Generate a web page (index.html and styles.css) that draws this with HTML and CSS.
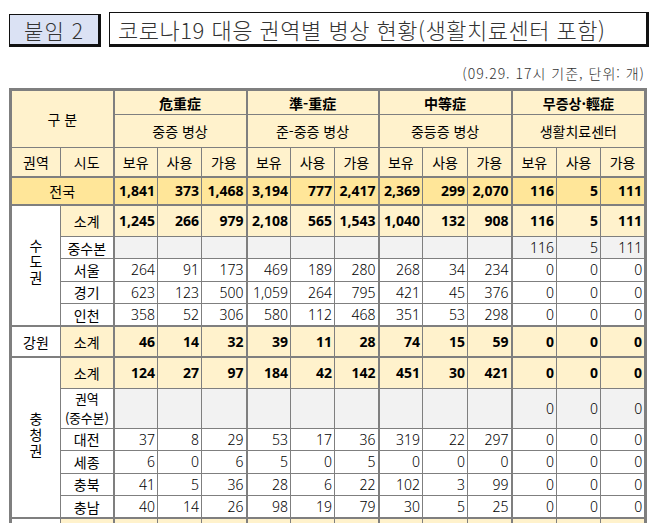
FILE: index.html
```html
<!DOCTYPE html>
<html lang="ko">
<head>
<meta charset="utf-8">
<title>코로나19 대응 권역별 병상 현황</title>
<link rel="stylesheet" href="styles.css">
</head>
<body>
<div class="page">
  <header class="title-row">
    <div class="tag">붙임 2</div>
    <div class="title">코로나19 대응 권역별 병상 현황(생활치료센터 포함)</div>
  </header>
  <p class="unit">(09.29. 17시 기준, 단위: 개)</p>
  <table class="beds">
    <colgroup class="lbl"><col class="c-region"><col class="c-city"></colgroup>
    <colgroup class="grp"><col class="c-a"><col class="c-a"><col class="c-b"></colgroup>
    <colgroup class="grp"><col class="c-a"><col class="c-a"><col class="c-a"></colgroup>
    <colgroup class="grp"><col class="c-a"><col class="c-b"><col class="c-a"></colgroup>
    <colgroup class="grp"><col class="c-b"><col class="c-a"><col class="c-b"></colgroup>
    <thead>
      <tr class="h1">
        <th colspan="2" rowspan="2" class="hd">구 분</th>
        <th colspan="3" class="hd bold">危重症</th>
        <th colspan="3" class="hd bold">準-重症</th>
        <th colspan="3" class="hd bold">中等症</th>
        <th colspan="3" class="hd bold">무증상·輕症</th>
      </tr>
      <tr class="h2">
        <th colspan="3" class="hd">중증 병상</th>
        <th colspan="3" class="hd">준-중증 병상</th>
        <th colspan="3" class="hd">중등증 병상</th>
        <th colspan="3" class="hd">생활치료센터</th>
      </tr>
      <tr class="h3">
        <th class="hd">권역</th><th class="hd">시도</th>
        <th class="hd">보유</th><th class="hd">사용</th><th class="hd">가용</th>
        <th class="hd">보유</th><th class="hd">사용</th><th class="hd">가용</th>
        <th class="hd">보유</th><th class="hd">사용</th><th class="hd">가용</th>
        <th class="hd">보유</th><th class="hd">사용</th><th class="hd">가용</th>
      </tr>
    </thead>
    <tbody class="nat">
      <tr class="r-nat">
        <th colspan="2" class="lab">전국</th>
        <td>1,841</td><td>373</td><td>1,468</td>
        <td>3,194</td><td>777</td><td>2,417</td>
        <td>2,369</td><td>299</td><td>2,070</td>
        <td>116</td><td>5</td><td>111</td>
      </tr>
    </tbody>
    <tbody class="region">
      <tr class="r-sub">
        <th rowspan="5" class="reg"><span class="vert">수도권</span></th>
        <th class="lab">소계</th>
        <td>1,245</td><td>266</td><td>979</td>
        <td>2,108</td><td>565</td><td>1,543</td>
        <td>1,040</td><td>132</td><td>908</td>
        <td>116</td><td>5</td><td>111</td>
      </tr>
      <tr class="r-hq">
        <th class="lab">중수본</th>
        <td></td><td></td><td></td>
        <td></td><td></td><td></td>
        <td></td><td></td><td></td>
        <td>116</td><td>5</td><td>111</td>
      </tr>
      <tr class="r-city">
        <th class="lab">서울</th>
        <td>264</td><td>91</td><td>173</td>
        <td>469</td><td>189</td><td>280</td>
        <td>268</td><td>34</td><td>234</td>
        <td>0</td><td>0</td><td>0</td>
      </tr>
      <tr class="r-city">
        <th class="lab">경기</th>
        <td>623</td><td>123</td><td>500</td>
        <td>1,059</td><td>264</td><td>795</td>
        <td>421</td><td>45</td><td>376</td>
        <td>0</td><td>0</td><td>0</td>
      </tr>
      <tr class="r-city">
        <th class="lab">인천</th>
        <td>358</td><td>52</td><td>306</td>
        <td>580</td><td>112</td><td>468</td>
        <td>351</td><td>53</td><td>298</td>
        <td>0</td><td>0</td><td>0</td>
      </tr>
    </tbody>
    <tbody class="region">
      <tr class="r-sub r-gw">
        <th class="reg">강원</th>
        <th class="lab">소계</th>
        <td>46</td><td>14</td><td>32</td>
        <td>39</td><td>11</td><td>28</td>
        <td>74</td><td>15</td><td>59</td>
        <td>0</td><td>0</td><td>0</td>
      </tr>
    </tbody>
    <tbody class="region">
      <tr class="r-sub r-cc">
        <th rowspan="6" class="reg"><span class="vert">충청권</span></th>
        <th class="lab">소계</th>
        <td>124</td><td>27</td><td>97</td>
        <td>184</td><td>42</td><td>142</td>
        <td>451</td><td>30</td><td>421</td>
        <td>0</td><td>0</td><td>0</td>
      </tr>
      <tr class="r-hq r-hq2">
        <th class="lab"><span class="two">권역</span><span class="two">(중수본)</span></th>
        <td></td><td></td><td></td>
        <td></td><td></td><td></td>
        <td></td><td></td><td></td>
        <td>0</td><td>0</td><td>0</td>
      </tr>
      <tr class="r-city">
        <th class="lab">대전</th>
        <td>37</td><td>8</td><td>29</td>
        <td>53</td><td>17</td><td>36</td>
        <td>319</td><td>22</td><td>297</td>
        <td>0</td><td>0</td><td>0</td>
      </tr>
      <tr class="r-city">
        <th class="lab">세종</th>
        <td>6</td><td>0</td><td>6</td>
        <td>5</td><td>0</td><td>5</td>
        <td>0</td><td>0</td><td>0</td>
        <td>0</td><td>0</td><td>0</td>
      </tr>
      <tr class="r-city">
        <th class="lab">충북</th>
        <td>41</td><td>5</td><td>36</td>
        <td>28</td><td>6</td><td>22</td>
        <td>102</td><td>3</td><td>99</td>
        <td>0</td><td>0</td><td>0</td>
      </tr>
      <tr class="r-city">
        <th class="lab">충남</th>
        <td>40</td><td>14</td><td>26</td>
        <td>98</td><td>19</td><td>79</td>
        <td>30</td><td>5</td><td>25</td>
        <td>0</td><td>0</td><td>0</td>
      </tr>
    </tbody>
    <tbody class="region">
      <tr class="r-sub">
        <th class="reg"></th>
        <th class="lab"></th>
        <td></td><td></td><td></td>
        <td></td><td></td><td></td>
        <td></td><td></td><td></td>
        <td></td><td></td><td></td>
      </tr>
    </tbody>
  </table>
</div>
</body>
</html>
```

FILE: styles.css
```css
* { box-sizing: border-box; }

body {
  margin: 0;
  background: #ffffff;
  color: #000000;
  font-family: "Noto Sans", "Noto Sans CJK KR", sans-serif;
}

.page {
  padding: 12px 0 0 9px;
  width: 657px;
}

.title-row {
  display: flex;
  align-items: flex-end;
  gap: 8px;
  height: 35px;
}

.tag {
  width: 92px;
  height: 33px;
  background: #dbe2f4;
  border-style: solid;
  border-color: #111111;
  border-width: 1px 3px 3px 1px;
  font-family: "Noto Sans CJK KR", sans-serif;
  font-weight: 300;
  font-size: 21px;
  letter-spacing: 1px;
  color: #333333;
  display: flex;
  align-items: center;
  justify-content: center;
  padding-top: 1px;
}

.title {
  width: 540px;
  height: 35px;
  background: #ffffff;
  border-style: solid;
  border-color: #111111;
  border-width: 1px 3px 3px 1px;
  font-family: "Noto Sans CJK KR", sans-serif;
  font-weight: 300;
  font-size: 22px;
  letter-spacing: 0.5px;
  color: #333333;
  display: flex;
  align-items: center;
  padding-left: 8px;
}

.unit {
  margin: 0;
  padding: 18px 12px 0 0;
  height: 41px;
  text-align: right;
  font-family: "Noto Sans CJK KR", sans-serif;
  font-weight: 300;
  font-size: 14px;
  letter-spacing: 1px;
  color: #333333;
  line-height: 16px;
}

.beds {
  border-collapse: collapse;
  table-layout: fixed;
  width: 637px;
  border: 3px solid #7f7f7f;
  font-size: 14px;
}

.c-region { width: 50px; }
.c-city { width: 53px; }
.c-a { width: 44px; }
.c-b { width: 45px; }

colgroup.grp { border-left: 2px solid #7f7f7f; }
thead { border-bottom: 2px solid #7f7f7f; }
tbody { border-top: 2px solid #7f7f7f; }

th, td {
  border: 1px solid #7f7f7f;
  padding: 0;
  overflow: hidden;
  white-space: nowrap;
}

th {
  font-weight: 400;
  font-family: "Noto Sans CJK KR", sans-serif;
  font-size: 14px;
  text-align: center;
  background: #ffffff;
}

th.hd { background: #fff2cc; }
th.bold { font-weight: 700; }

td {
  text-align: right;
  padding-right: 2px;
  font-weight: 300;
  background: #ffffff;
}

.h1 { height: 25px; }
.h2 { height: 33px; }
.h3 { height: 29px; }

.r-nat { height: 28px; }
.r-nat th, .r-nat td { background: #ffe699; }
.r-nat td { font-weight: 700; }

.r-sub { height: 32px; }
.r-gw, .r-cc { height: 31px; }
.r-sub th.lab, .r-sub td { background: #fff2cc; }
.r-sub td { font-weight: 700; }

.r-hq { height: 22px; }
.r-hq td { background: #f2f2f2; }
.r-hq2 { height: 40px; }

.two {
  display: block;
  line-height: 19px;
  font-size: 13px;
  letter-spacing: -0.2px;
}

.r-city { height: 22.5px; }

th.lab { line-height: 18px; }

th.reg { background: #ffffff; }

.vert {
  display: inline-block;
  writing-mode: vertical-rl;
  text-orientation: upright;
  letter-spacing: 2px;
  line-height: 16px;
}
```
